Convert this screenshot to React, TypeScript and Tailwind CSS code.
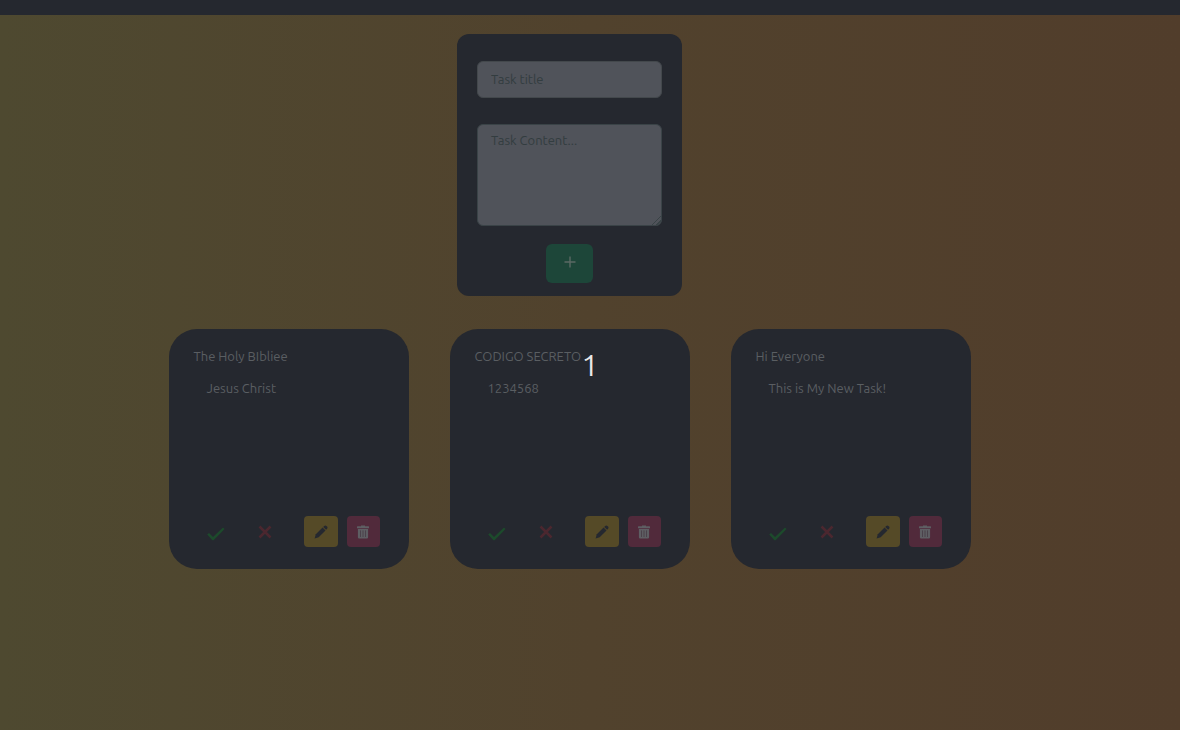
import { useState } from "react";

type Task = { title: string; content: string };

const tasks: Task[] = [
  { title: "The Holy BIbliee", content: "Jesus Christ" },
  { title: "CODIGO SECRETO", content: "1234568" },
  { title: "Hi Everyone", content: "This is My New Task!" },
];

function CheckIcon() {
  return (
    <svg viewBox="0 0 20 20" className="size-5" fill="currentColor" aria-hidden="true">
      <path d="M1.2 10.6 L3 9 L7 12.9 L17 3.6 L18.6 5 L7.6 16.2 L6.4 16.2 Z" />
    </svg>
  );
}

function CrossIcon() {
  return (
    <svg viewBox="0 0 14 14" className="size-3.5" fill="none" stroke="currentColor" strokeWidth="2.6" aria-hidden="true">
      <path d="M1.5 1.5 L12.5 12.5 M12.5 1.5 L1.5 12.5" />
    </svg>
  );
}

function PencilIcon() {
  return (
    <svg viewBox="0 0 14 14" className="size-3.5" fill="currentColor" aria-hidden="true">
      <path d="M0.6 13.4 L1.8 9.3 L8.6 2.5 L11.5 5.4 L4.7 12.2 Z" />
      <path d="M9.2 1.9 L10.2 0.9 Q11.3 0 12.4 0.9 L13.1 1.6 Q14 2.7 13.1 3.8 L12.1 4.8 Z" />
    </svg>
  );
}

function TrashIcon() {
  return (
    <svg viewBox="0 0 14 14" className="size-3.5" aria-hidden="true">
      <path
        fill="currentColor"
        d="M5 0.5 H9 V1.2 H12.4 Q13 1.2 13 1.8 V3.2 H1 V1.8 Q1 1.2 1.6 1.2 H5 Z M1.9 3.9 H12.1 V12.2 Q12.1 13.5 10.8 13.5 H3.2 Q1.9 13.5 1.9 12.2 Z"
      />
      <path stroke="#4a4048" strokeWidth="0.9" d="M4.5 5.4 V12 M7 5.4 V12 M9.5 5.4 V12" />
    </svg>
  );
}

function TaskForm() {
  const [title, setTitle] = useState("");
  const [content, setContent] = useState("");
  return (
    <form
      className="flex w-[225px] flex-col items-center rounded-xl bg-[#25282f] px-5 pt-[27px] pb-[13px]"
      onSubmit={(e) => e.preventDefault()}
    >
      <input
        type="text"
        aria-label="Task title"
        placeholder="Task title"
        value={title}
        onChange={(e) => setTitle(e.target.value)}
        className="h-[37px] w-full rounded-md border border-[#43484c] bg-[#50535a] px-[13px] pb-0.5 text-[#25282f] placeholder:text-[#333d40]"
      />
      <textarea
        aria-label="Task content"
        placeholder="Task Content..."
        value={content}
        onChange={(e) => setContent(e.target.value)}
        className="mt-[26px] block h-[102px] w-full resize rounded-md border border-[#3a4347] bg-[#50535a] px-[13px] py-[5px] text-[#25282f] placeholder:text-[#333d40] [&::-webkit-resizer]:bg-[linear-gradient(135deg,transparent_68%,#394346_68%,#394346_72%,transparent_72%,transparent_83%,#394346_83%,#394346_87%,transparent_87%)]"
      />
      <button
        type="submit"
        aria-label="Add task"
        className="mt-[18px] flex h-[39px] w-[47px] items-center justify-center rounded-md bg-[#1d4639] text-[#5b6964]"
      >
        <svg viewBox="0 0 12 12" className="mb-1 size-3" stroke="currentColor" strokeWidth="1.4" aria-hidden="true">
          <path d="M6 0.5 V11.5 M0.5 6 H11.5" />
        </svg>
      </button>
    </form>
  );
}

function TaskCard({ task }: { task: Task }) {
  return (
    <article className="flex size-60 flex-col rounded-[28px] bg-[#25282f] px-[25px] pt-[17px] pb-[22px] text-[#5a5e62]">
      <h2>{task.title}</h2>
      <p className="mt-3 px-[13px]">{task.content}</p>
      <div className="mt-auto flex items-center pl-3">
        <button type="button" aria-label="Mark as done" className="pt-1 text-[#1d4a2c]">
          <CheckIcon />
        </button>
        <button type="button" aria-label="Mark as not done" className="ml-8 text-[#4b272f]">
          <CrossIcon />
        </button>
        <button
          type="button"
          aria-label="Edit task"
          className="ml-8 flex h-[31px] w-[34px] items-center justify-center rounded bg-[#554a27] text-[#25282f]"
        >
          <PencilIcon />
        </button>
        <button
          type="button"
          aria-label="Delete task"
          className="ml-[9px] flex h-[31px] w-[33px] items-center justify-center rounded bg-[#512a3b] text-[#5e5e63]"
        >
          <TrashIcon />
        </button>
      </div>
    </article>
  );
}

export default function App() {
  return (
    <div className="relative min-h-screen bg-linear-to-r from-[#4e4930] via-[#51422d] to-[#513d2b] font-['Ubuntu','Noto_Sans',sans-serif] text-[13px] leading-5">
      <header className="h-[15px] bg-[#25282f]" />
      <main className="flex flex-col items-center pt-[19px] pr-[41px]">
        <TaskForm />
        <section aria-label="Tasks" className="mt-[33px] flex flex-wrap justify-center gap-[41px]">
          {tasks.map((task) => (
            <TaskCard key={task.title} task={task} />
          ))}
        </section>
      </main>
      <output className="pointer-events-none absolute inset-0 flex h-screen items-center justify-center text-[30px] leading-10 text-[#e8e8e8]">
        1
      </output>
    </div>
  );
}
